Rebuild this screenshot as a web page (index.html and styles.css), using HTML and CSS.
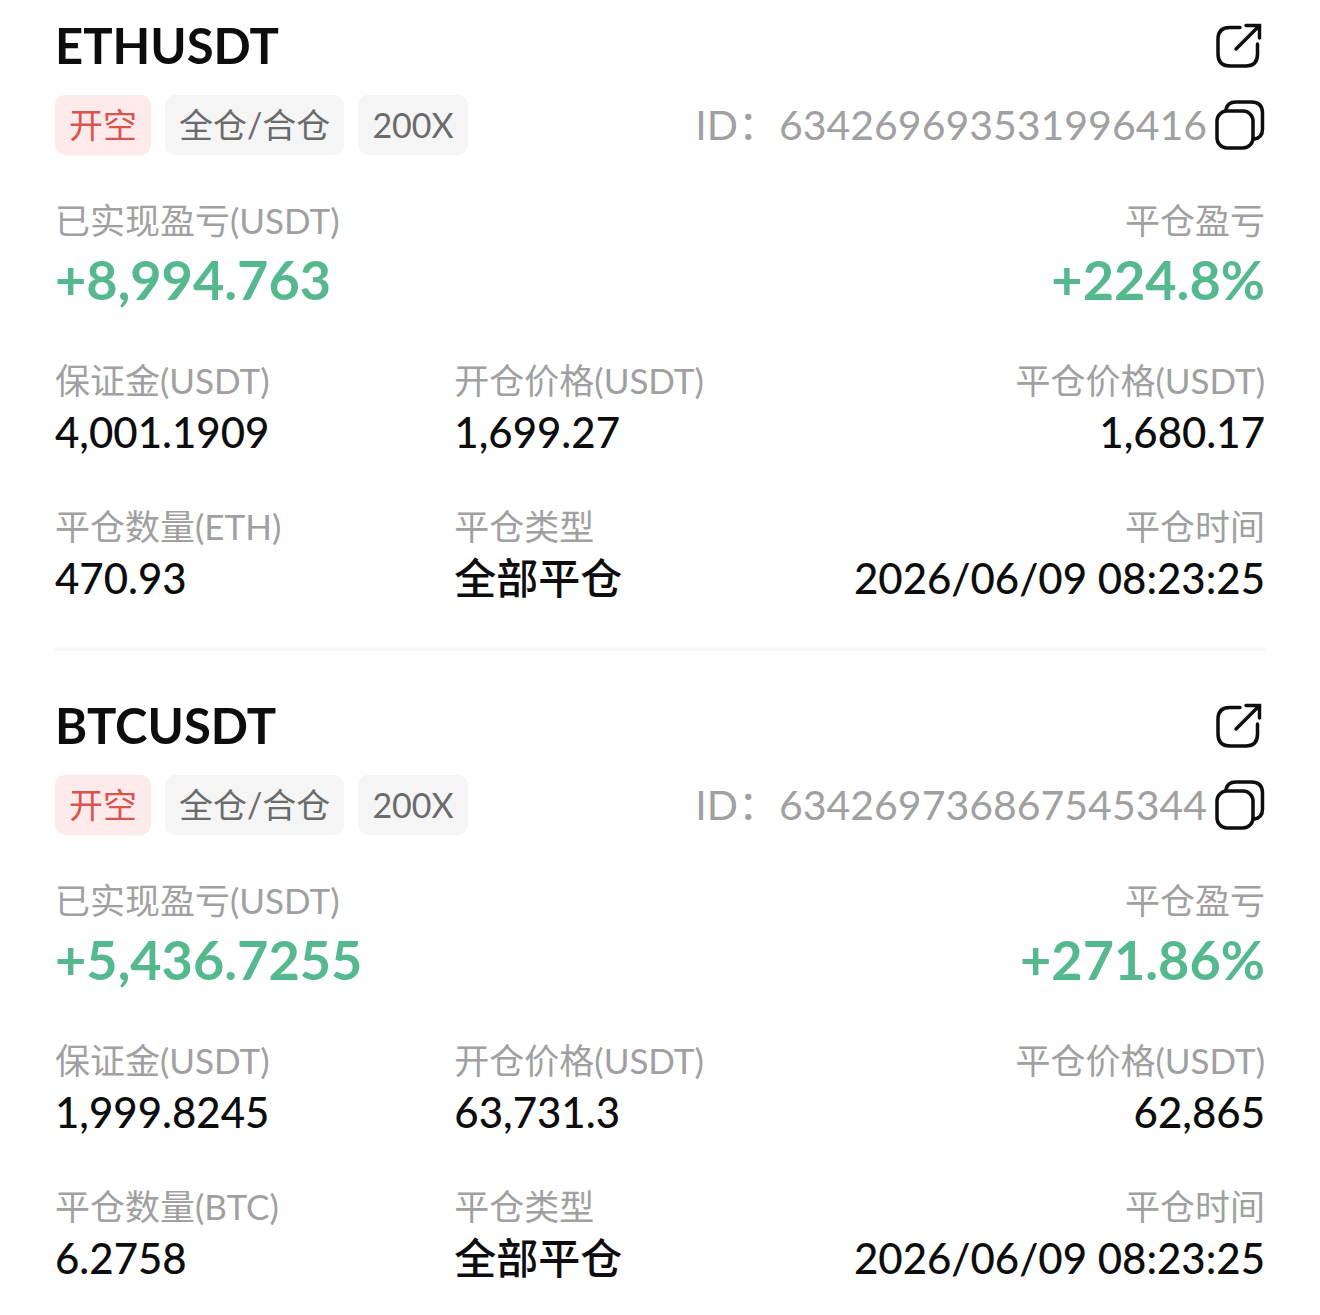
FILE: index.html
```
<!DOCTYPE html>
<html lang="zh-CN">
<head>
    <meta charset="UTF-8">
    <meta name="viewport" content="width=device-width, initial-scale=1.0">
    <title>历史仓位</title>
    <link rel="stylesheet" href="styles.css">
</head>
<body>
    <!-- shared icons -->
    <svg class="sprite" aria-hidden="true">
        <symbol id="icon-share" viewBox="0 0 50 50" stroke-width="3.5">
            <path d="M25 7.500H15Q3 7.500 3 19V34Q3 46 15 46H31Q42.500 46 42.500 34V24"/>
            <path d="M21 29L43 7M31 5.500H44.500V18" stroke-linejoin="miter"/>
        </symbol>
        <symbol id="icon-copy" viewBox="0 0 50 50" stroke-width="3.5">
            <rect x="2" y="11" width="36" height="37" rx="10"/>
            <path d="M11 10Q12 2 21 2H36Q47.500 2 47.500 13V29Q47.500 38 39 39"/>
        </symbol>
    </svg>

    <main class="list">
        <article class="record">
            <header class="record-head">
                <h2>ETHUSDT</h2>
                <button class="icon-btn" type="button" aria-label="分享"><svg><use href="#icon-share"/></svg></button>
            </header>
            <div class="meta">
                <div class="tags">
                    <span class="tag short">开空</span>
                    <span class="tag">全仓/合仓</span>
                    <span class="tag">200X</span>
                </div>
                <div class="order-id">
                    <span>ID：634269693531996416</span>
                    <button class="icon-btn" type="button" aria-label="复制"><svg><use href="#icon-copy"/></svg></button>
                </div>
            </div>
            <dl class="profit">
                <div>
                    <dt>已实现盈亏(USDT)</dt>
                    <dd>+8,994.763</dd>
                </div>
                <div class="right">
                    <dt>平仓盈亏</dt>
                    <dd>+224.8%</dd>
                </div>
            </dl>
            <dl class="details">
                <div>
                    <dt>保证金(USDT)</dt>
                    <dd>4,001.1909</dd>
                </div>
                <div>
                    <dt>开仓价格(USDT)</dt>
                    <dd>1,699.27</dd>
                </div>
                <div class="right">
                    <dt>平仓价格(USDT)</dt>
                    <dd>1,680.17</dd>
                </div>
                <div>
                    <dt>平仓数量(ETH)</dt>
                    <dd>470.93</dd>
                </div>
                <div>
                    <dt>平仓类型</dt>
                    <dd>全部平仓</dd>
                </div>
                <div class="right">
                    <dt>平仓时间</dt>
                    <dd>2026/06/09 08:23:25</dd>
                </div>
            </dl>
        </article>

        <article class="record">
            <header class="record-head">
                <h2>BTCUSDT</h2>
                <button class="icon-btn" type="button" aria-label="分享"><svg><use href="#icon-share"/></svg></button>
            </header>
            <div class="meta">
                <div class="tags">
                    <span class="tag short">开空</span>
                    <span class="tag">全仓/合仓</span>
                    <span class="tag">200X</span>
                </div>
                <div class="order-id">
                    <span>ID：634269736867545344</span>
                    <button class="icon-btn" type="button" aria-label="复制"><svg><use href="#icon-copy"/></svg></button>
                </div>
            </div>
            <dl class="profit">
                <div>
                    <dt>已实现盈亏(USDT)</dt>
                    <dd>+5,436.7255</dd>
                </div>
                <div class="right">
                    <dt>平仓盈亏</dt>
                    <dd>+271.86%</dd>
                </div>
            </dl>
            <dl class="details">
                <div>
                    <dt>保证金(USDT)</dt>
                    <dd>1,999.8245</dd>
                </div>
                <div>
                    <dt>开仓价格(USDT)</dt>
                    <dd>63,731.3</dd>
                </div>
                <div class="right">
                    <dt>平仓价格(USDT)</dt>
                    <dd>62,865</dd>
                </div>
                <div>
                    <dt>平仓数量(BTC)</dt>
                    <dd>6.2758</dd>
                </div>
                <div>
                    <dt>平仓类型</dt>
                    <dd>全部平仓</dd>
                </div>
                <div class="right">
                    <dt>平仓时间</dt>
                    <dd>2026/06/09 08:23:25</dd>
                </div>
            </dl>
        </article>
    </main>
</body>
</html>
```
FILE: styles.css
```
* {
    box-sizing: border-box;
}
body {
    margin: 0;
    background-color: #fff;
    color: #0d0d0d;
    font-family: Lato, "Noto Sans CJK SC", sans-serif;
}
.sprite {
    display: none;
}
.list {
    padding: 15px 55px 24px;
}
.record + .record {
    margin-top: 41px;
    padding-top: 44px;
    border-top: 4px solid #f8f8f8;
}
.record-head,
.meta,
.tags,
.order-id,
.profit {
    display: flex;
    align-items: center;
}
.record-head,
.meta,
.profit {
    justify-content: space-between;
}
h2 {
    margin: 0;
    font-size: 49px;
    font-weight: 700;
    line-height: 60px;
}
.icon-btn {
    display: block;
    padding: 0;
    border: none;
    background: none;
    color: #0d0d0d;
    cursor: pointer;
}
.icon-btn svg {
    display: block;
    width: 50px;
    height: 50px;
    fill: none;
    stroke: currentColor;
    stroke-linecap: round;
    stroke-linejoin: round;
}
.meta {
    margin-top: 20px;
}
.tags {
    gap: 14px;
}
.tag {
    padding: 0 14px;
    border-radius: 10px;
    background-color: #f5f5f5;
    color: #6b6b6b;
    font-size: 34px;
    line-height: 60px;
}
.tag.short {
    background-color: #fdeaea;
    color: #d9544f;
}
.order-id {
    gap: 8px;
    color: #a0a0a0;
    font-size: 41px;
    line-height: 60px;
}
dl,
dd {
    margin: 0;
}
dt {
    color: #a0a0a0;
    font-size: 35px;
    line-height: 48px;
}
.right {
    text-align: right;
}
.profit {
    margin-top: 41px;
}
.profit dd {
    margin-top: 4px;
    color: #55b88e;
    font-size: 54px;
    font-weight: 700;
    line-height: 64px;
}
.details {
    display: grid;
    grid-template-columns: 33% 1fr auto;
    row-gap: 42px;
    margin-top: 44px;
}
.details dd {
    font-size: 42px;
    font-weight: 500;
    line-height: 56px;
}
```
